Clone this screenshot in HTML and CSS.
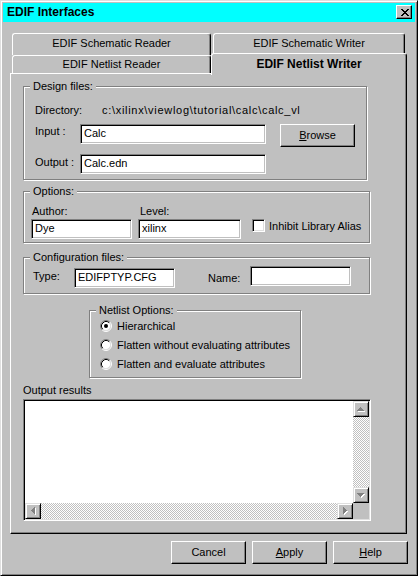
FILE: index.html
```html
<!DOCTYPE html>
<html>
<head>
<meta charset="utf-8">
<title>EDIF Interfaces</title>
<link rel="stylesheet" href="styles.css">
</head>
<body>
<div class="window">
  <div class="titlebar">
    <span class="title">EDIF Interfaces</span>
    <span class="close-btn">
      <svg width="8" height="7" viewBox="0 0 8 7" shape-rendering="crispEdges">
        <rect x="0" y="0" width="2" height="1"/><rect x="6" y="0" width="2" height="1"/>
        <rect x="1" y="1" width="2" height="1"/><rect x="5" y="1" width="2" height="1"/>
        <rect x="2" y="2" width="4" height="1"/>
        <rect x="3" y="3" width="2" height="1"/>
        <rect x="2" y="4" width="4" height="1"/>
        <rect x="1" y="5" width="2" height="1"/><rect x="5" y="5" width="2" height="1"/>
        <rect x="0" y="6" width="2" height="1"/><rect x="6" y="6" width="2" height="1"/>
      </svg>
    </span>
  </div>

  <div class="tabstrip">
    <div class="tab-row back">
      <div class="tab tab-l">EDIF Schematic Reader</div>
      <div class="tab tab-r">EDIF Schematic Writer</div>
    </div>
    <div class="tab-row front">
      <div class="tab tab-l">EDIF Netlist Reader</div>
      <div class="tab active">EDIF Netlist Writer</div>
    </div>
  </div>

  <div class="panel">
    <div class="group g-design">
      <div class="group-title">Design files:</div>
      <div class="dir-row"><span class="lbl-dir">Directory:</span><span class="dir-path">c:\xilinx\viewlog\tutorial\calc\calc_vl</span></div>
      <div class="io-row input-row">
        <span class="lbl-io lbl-in">Input :</span>
        <div class="field f-path">Calc</div>
        <div class="btn btn-browse"><span><u>B</u>rowse</span></div>
      </div>
      <div class="io-row output-row">
        <span class="lbl-io lbl-out">Output :</span>
        <div class="field f-path">Calc.edn</div>
      </div>
    </div>

    <div class="group g-options">
      <div class="group-title">Options:</div>
      <div class="opt-body">
        <div class="col col-author">
          <span class="col-lbl">Author:</span>
          <div class="field f-author">Dye</div>
        </div>
        <div class="col col-level">
          <span class="col-lbl">Level:</span>
          <div class="field f-level">xilinx</div>
        </div>
        <div class="check-wrap">
          <span class="checkbox"></span>
          <span class="check-lbl">Inhibit Library Alias</span>
        </div>
      </div>
    </div>

    <div class="group g-config">
      <div class="group-title">Configuration files:</div>
      <div class="cfg-row">
        <span class="lbl-type">Type:</span>
        <div class="field f-type">EDIFPTYP.CFG</div>
        <span class="lbl-name">Name:</span>
        <div class="field f-name"></div>
      </div>
    </div>

    <div class="group g-netlist">
      <div class="group-title">Netlist Options:</div>
      <div class="radio-list">
        <div class="radio-row">
          <svg class="radio" width="12" height="12" viewBox="0 0 12 12">
            <circle cx="6" cy="6" r="4.5" fill="#fff"/>
            <path d="M9.89 2.11 A5.5 5.5 0 0 0 2.11 9.89" fill="none" stroke="#808080"/>
            <path d="M2.11 9.89 A5.5 5.5 0 0 0 9.89 2.11" fill="none" stroke="#fff"/>
            <path d="M9.18 2.82 A4.5 4.5 0 0 0 2.82 9.18" fill="none" stroke="#000"/>
            <path d="M2.82 9.18 A4.5 4.5 0 0 0 9.18 2.82" fill="none" stroke="#dfdfdf"/>
            <circle cx="6" cy="6" r="2" fill="#000"/>
          </svg>
          <span>Hierarchical</span>
        </div>
        <div class="radio-row">
          <svg class="radio" width="12" height="12" viewBox="0 0 12 12">
            <circle cx="6" cy="6" r="4.5" fill="#fff"/>
            <path d="M9.89 2.11 A5.5 5.5 0 0 0 2.11 9.89" fill="none" stroke="#808080"/>
            <path d="M2.11 9.89 A5.5 5.5 0 0 0 9.89 2.11" fill="none" stroke="#fff"/>
            <path d="M9.18 2.82 A4.5 4.5 0 0 0 2.82 9.18" fill="none" stroke="#000"/>
            <path d="M2.82 9.18 A4.5 4.5 0 0 0 9.18 2.82" fill="none" stroke="#dfdfdf"/>
          </svg>
          <span>Flatten without evaluating attributes</span>
        </div>
        <div class="radio-row">
          <svg class="radio" width="12" height="12" viewBox="0 0 12 12">
            <circle cx="6" cy="6" r="4.5" fill="#fff"/>
            <path d="M9.89 2.11 A5.5 5.5 0 0 0 2.11 9.89" fill="none" stroke="#808080"/>
            <path d="M2.11 9.89 A5.5 5.5 0 0 0 9.89 2.11" fill="none" stroke="#fff"/>
            <path d="M9.18 2.82 A4.5 4.5 0 0 0 2.82 9.18" fill="none" stroke="#000"/>
            <path d="M2.82 9.18 A4.5 4.5 0 0 0 9.18 2.82" fill="none" stroke="#dfdfdf"/>
          </svg>
          <span>Flatten and evaluate attributes</span>
        </div>
      </div>
    </div>

    <div class="out-lbl">Output results</div>
    <div class="textarea">
      <div class="text-area-body"></div>
      <div class="vscroll">
        <div class="sbtn">
          <svg width="8" height="5" viewBox="0 0 8 5" shape-rendering="crispEdges">
            <g fill="#fff"><rect x="4" y="1" width="1" height="1"/><rect x="3" y="2" width="3" height="1"/><rect x="2" y="3" width="5" height="1"/><rect x="1" y="4" width="7" height="1"/></g>
            <g fill="#808080"><rect x="3" y="0" width="1" height="1"/><rect x="2" y="1" width="3" height="1"/><rect x="1" y="2" width="5" height="1"/><rect x="0" y="3" width="7" height="1"/></g>
          </svg>
        </div>
        <div class="track"></div>
        <div class="sbtn">
          <svg width="8" height="5" viewBox="0 0 8 5" shape-rendering="crispEdges">
            <g fill="#fff"><rect x="1" y="1" width="7" height="1"/><rect x="2" y="2" width="5" height="1"/><rect x="3" y="3" width="3" height="1"/><rect x="4" y="4" width="1" height="1"/></g>
            <g fill="#808080"><rect x="0" y="0" width="7" height="1"/><rect x="1" y="1" width="5" height="1"/><rect x="2" y="2" width="3" height="1"/><rect x="3" y="3" width="1" height="1"/></g>
          </svg>
        </div>
      </div>
      <div class="hscroll">
        <div class="sbtn">
          <svg width="5" height="8" viewBox="0 0 5 8" shape-rendering="crispEdges">
            <g fill="#fff"><rect x="1" y="4" width="1" height="1"/><rect x="2" y="3" width="1" height="3"/><rect x="3" y="2" width="1" height="5"/><rect x="4" y="1" width="1" height="7"/></g>
            <g fill="#808080"><rect x="0" y="3" width="1" height="1"/><rect x="1" y="2" width="1" height="3"/><rect x="2" y="1" width="1" height="5"/><rect x="3" y="0" width="1" height="7"/></g>
          </svg>
        </div>
        <div class="track"></div>
        <div class="sbtn">
          <svg width="5" height="8" viewBox="0 0 5 8" shape-rendering="crispEdges">
            <g fill="#fff"><rect x="1" y="1" width="1" height="7"/><rect x="2" y="2" width="1" height="5"/><rect x="3" y="3" width="1" height="3"/><rect x="4" y="4" width="1" height="1"/></g>
            <g fill="#808080"><rect x="0" y="0" width="1" height="7"/><rect x="1" y="1" width="1" height="5"/><rect x="2" y="2" width="1" height="3"/><rect x="3" y="3" width="1" height="1"/></g>
          </svg>
        </div>
      </div>
      <div class="corner"></div>
    </div>
  </div>

  <div class="btn-row">
    <div class="btn"><span>Cancel</span></div>
    <div class="btn"><span><u>A</u>pply</span></div>
    <div class="btn"><span><u>H</u>elp</span></div>
  </div>
</div>
</body>
</html>
```

FILE: styles.css
```css
html, body {
  margin: 0;
  padding: 0;
  background: #c0c0c0;
}

body {
  font-family: "Liberation Sans", Arial, sans-serif;
  font-size: 11px;
  line-height: 13px;
  color: #000;
}

.window {
  box-sizing: border-box;
  width: 418px;
  height: 576px;
  background: #c0c0c0;
  border: 1px solid;
  border-color: #dfdfdf #000 #000 #dfdfdf;
  box-shadow: inset 1px 1px 0 #fff, inset -1px -1px 0 #808080;
  padding: 2px;
  display: flex;
  flex-direction: column;
}

/* title bar */
.titlebar {
  height: 19px;
  flex: none;
  background: #00ffff;
  display: flex;
  justify-content: space-between;
  align-items: center;
  padding: 0 3px 0 4px;
}

.title {
  font-weight: bold;
  font-size: 12px;
  line-height: 13px;
}

.close-btn {
  box-sizing: border-box;
  width: 16px;
  height: 14px;
  align-self: flex-start;
  margin-top: 2px;
  background: #c0c0c0;
  border: 1px solid;
  border-color: #fff #000 #000 #fff;
  box-shadow: inset -1px -1px 0 #808080;
  display: flex;
  align-items: center;
  justify-content: center;
}

.close-btn svg {
  fill: #000;
  margin-left: 1px;
}

/* tabs */
.tabstrip {
  margin: 11px 0 0 9px;
  flex: none;
}

.tab-row {
  display: flex;
  align-items: flex-start;
}

.tab {
  box-sizing: border-box;
  background: #c0c0c0;
  border-top: 1px solid #fff;
  border-left: 1px solid #fff;
  border-right: 1px solid #000;
  box-shadow: inset -1px 0 0 #808080;
  border-radius: 3px 3px 0 0;
  text-align: center;
}

.back {
  height: 22px;
  gap: 2px;
}

.back .tab {
  height: 22px;
  padding-top: 3px;
}

.back .tab-l {
  width: 199px;
}

.back .tab-r {
  width: 192px;
}

.front {
  height: 18px;
}

.front .tab-l {
  width: 199px;
  height: 18px;
  padding-top: 2px;
}

.tab.active {
  position: relative;
  z-index: 1;
  width: 196px;
  height: 22px;
  margin-top: -2px;
  padding-top: 4px;
  font-weight: bold;
  font-size: 12px;
}

/* panel */
.panel {
  box-sizing: border-box;
  flex: none;
  margin-left: 7px;
  width: 397px;
  height: 461px;
  border-top: 1px solid #fff;
  border-left: 1px solid #fff;
  border-right: 1px solid #000;
  border-bottom: 1px solid #000;
  box-shadow: inset -1px -1px 0 #808080;
  display: flex;
  flex-direction: column;
  align-items: flex-start;
}

/* group boxes */
.group {
  box-sizing: border-box;
  flex: none;
  margin-left: 12px;
  border: 1px solid #808080;
  box-shadow: 1px 1px 0 #fff, inset 1px 1px 0 #fff;
  display: flex;
  flex-direction: column;
  align-items: flex-start;
}

.group-title {
  margin: -7px 0 0 6px;
  padding: 0 3px;
  background: #c0c0c0;
  line-height: 13px;
}

.g-design {
  margin-top: 12px;
  width: 344px;
  height: 94px;
}

.g-options {
  margin-top: 11px;
  width: 347px;
  height: 52px;
}

.g-config {
  margin-top: 14px;
  width: 347px;
  height: 37px;
}

.g-netlist {
  margin-top: 16px;
  margin-left: 78px;
  width: 212px;
  height: 68px;
}

/* fields */
.field {
  box-sizing: border-box;
  height: 20px;
  background: #fff;
  border: 1px solid;
  border-color: #808080 #fff #fff #808080;
  box-shadow: inset 1px 1px 0 #000, inset -1px -1px 0 #c0c0c0;
  padding: 2px 0 0 3px;
  line-height: 13px;
  white-space: nowrap;
}

.btn {
  box-sizing: border-box;
  width: 75px;
  height: 23px;
  background: #c0c0c0;
  border: 1px solid;
  border-color: #fff #000 #000 #fff;
  box-shadow: inset -1px -1px 0 #808080;
  display: flex;
  align-items: center;
  justify-content: center;
  line-height: 13px;
}

/* design files */
.dir-row {
  display: flex;
  margin: 11px 0 0 11px;
}

.lbl-dir {
  width: 67px;
}

.dir-path {
  letter-spacing: 0.7px;
}

.io-row {
  display: flex;
  align-items: flex-start;
  margin: 7px 0 0 11px;
}

.lbl-io {
  width: 45px;
}

.lbl-in {
  margin-top: 1px;
}

.lbl-out {
  margin-top: 2px;
}

.f-path {
  width: 186px;
}

.btn-browse {
  margin-left: 14px;
}

/* options */
.opt-body {
  display: flex;
  margin: 7px 0 0 7px;
}

.col {
  display: flex;
  flex-direction: column;
  gap: 1px;
}

.col-author .col-lbl {
  padding-left: 1px;
}

.col-level {
  margin-left: 6px;
}

.col-level .col-lbl {
  padding-left: 2px;
}

.f-author {
  width: 101px;
}

.f-level {
  width: 103px;
}

.check-wrap {
  display: flex;
  align-items: flex-start;
  gap: 4px;
  align-self: flex-end;
  margin: 0 0 6px 11px;
}

.checkbox {
  box-sizing: border-box;
  width: 13px;
  height: 13px;
  background: #fff;
  border: 1px solid;
  border-color: #808080 #fff #fff #808080;
  box-shadow: inset 1px 1px 0 #000, inset -1px -1px 0 #dfdfdf;
}

.check-lbl {
  margin-top: 1px;
}

/* configuration */
.cfg-row {
  display: flex;
  align-items: flex-start;
  margin: 2px 0 0 9px;
}

.lbl-type {
  width: 41px;
  margin-top: 4px;
}

.f-type {
  width: 101px;
  margin-top: 2px;
}

.lbl-name {
  width: 42px;
  margin: 6px 0 0 33px;
}

.f-name {
  width: 101px;
}

/* netlist options */
.radio-list {
  display: flex;
  flex-direction: column;
  margin: 3px 0 0 10px;
}

.radio-row {
  display: flex;
  align-items: flex-start;
  gap: 5px;
  height: 19px;
}

.radio {
  flex: none;
}

/* output */
.out-lbl {
  margin: 6px 0 0 12px;
}

.textarea {
  box-sizing: border-box;
  margin: 2px 0 0 12px;
  width: 348px;
  height: 122px;
  padding: 1px;
  border: 1px solid;
  border-color: #808080 #fff #fff #808080;
  box-shadow: inset 1px 1px 0 #000, inset -1px -1px 0 #dfdfdf;
  display: grid;
  grid-template-columns: 1fr 16px;
  grid-template-rows: 1fr 16px;
}

.text-area-body {
  background: #fff;
}

.vscroll {
  display: flex;
  flex-direction: column;
}

.hscroll {
  display: flex;
}

.track {
  flex: 1;
  background-image: conic-gradient(#fff 25%, #c0c0c0 0 50%, #fff 0 75%, #c0c0c0 0);
  background-size: 2px 2px;
}

.corner {
  background: #c0c0c0;
}

.sbtn {
  box-sizing: border-box;
  flex: none;
  width: 16px;
  height: 16px;
  background: #c0c0c0;
  border: 1px solid;
  border-color: #dfdfdf #000 #000 #dfdfdf;
  box-shadow: inset 1px 1px 0 #fff, inset -1px -1px 0 #808080;
  display: flex;
  align-items: center;
  justify-content: center;
}

/* bottom buttons */
.btn-row {
  display: flex;
  justify-content: flex-end;
  gap: 6px;
  margin-top: 7px;
  padding-right: 7px;
}
```
